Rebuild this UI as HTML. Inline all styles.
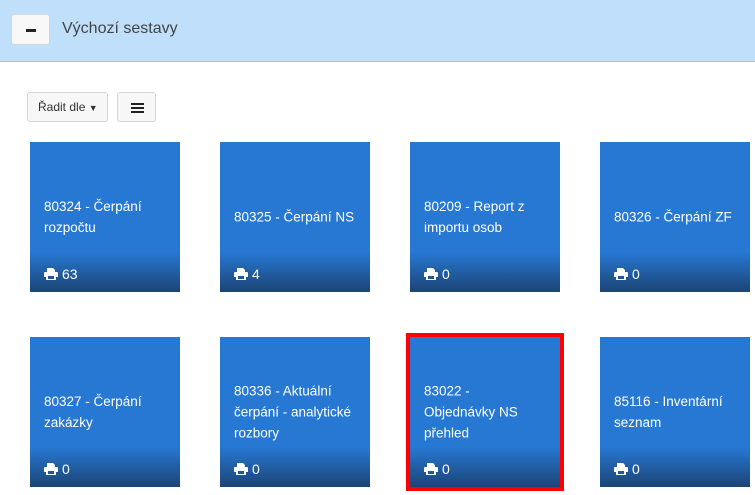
<!DOCTYPE html>
<html><head><meta charset="utf-8"><style>
*{box-sizing:border-box;margin:0;padding:0}
body{width:755px;height:495px;overflow:hidden;background:#fff;font-family:"Liberation Sans","DejaVu Sans",sans-serif;position:relative}
.hdr{position:absolute;left:0;top:0;width:755px;height:62px;background:#bfdffb;border-bottom:1px solid #8ec5f2}
.btn{position:absolute;background:#f7f7f7;border:1px solid #d6d6d6;border-radius:3px}
.title{position:absolute;left:62px;top:20px;font-size:16px;color:#444}
.tile{position:absolute;width:150px;height:150px;background:linear-gradient(to bottom,#2778d3 0,#2778d3 110px,#1c4475 150px);color:#fff}
.tile .t{position:absolute;left:14px;top:75px;transform:translateY(-50%);font-size:13.5px;line-height:21px;width:125px}
.tile .c{position:absolute;left:14px;top:124px;font-size:14px;display:flex;align-items:center;gap:4px}
.red{position:absolute;left:406px;top:333px;width:158px;height:158px;border:4px solid #f00}
</style></head><body>
<div class="hdr">
<div class="btn" style="left:11px;top:14px;width:39px;height:31px;background:#f8f8f8"><div style="position:absolute;left:14px;top:14px;width:10px;height:3px;background:#222"></div></div>
<div class="title">Výchozí sestavy</div>
</div>
<div class="btn" style="left:27px;top:92px;width:81px;height:30px;font-size:12px;color:#333;padding:7px 0 0 10px">Řadit dle <span style="font-size:9px">▼</span></div>
<div class="btn" style="left:117px;top:92px;width:39px;height:30px"><div style="position:absolute;left:13px;top:10px;width:13px;height:2px;background:#222;box-shadow:0 4px 0 #222,0 8px 0 #222"></div></div>

<svg width="0" height="0" style="position:absolute"><symbol id="p" viewBox="0 0 14 12"><path fill="#fff" d="M3 0h6l2 2v2H3zM1 4h12a1 1 0 0 1 1 1v4h-2v3H2V9H0V5a1 1 0 0 1 1-1zm3 4v3h6V8z"/></symbol></svg>

<div class="tile" style="left:30px;top:142px"><div class="t">80324 - Čerpání rozpočtu</div><div class="c"><svg width="14" height="12"><use href="#p"/></svg>63</div></div>
<div class="tile" style="left:220px;top:142px"><div class="t">80325 - Čerpání NS</div><div class="c"><svg width="14" height="12"><use href="#p"/></svg>4</div></div>
<div class="tile" style="left:410px;top:142px"><div class="t">80209 - Report z importu osob</div><div class="c"><svg width="14" height="12"><use href="#p"/></svg>0</div></div>
<div class="tile" style="left:600px;top:142px"><div class="t">80326 - Čerpání ZF</div><div class="c"><svg width="14" height="12"><use href="#p"/></svg>0</div></div>
<div class="tile" style="left:30px;top:337px"><div class="t">80327 - Čerpání zakázky</div><div class="c"><svg width="14" height="12"><use href="#p"/></svg>0</div></div>
<div class="tile" style="left:220px;top:337px"><div class="t">80336 - Aktuální čerpání - analytické rozbory</div><div class="c"><svg width="14" height="12"><use href="#p"/></svg>0</div></div>
<div class="tile" style="left:410px;top:337px"><div class="t">83022 -<br>Objednávky NS přehled</div><div class="c"><svg width="14" height="12"><use href="#p"/></svg>0</div></div>
<div class="tile" style="left:600px;top:337px"><div class="t">85116 - Inventární seznam</div><div class="c"><svg width="14" height="12"><use href="#p"/></svg>0</div></div>
<div class="red"></div>
</body></html>
